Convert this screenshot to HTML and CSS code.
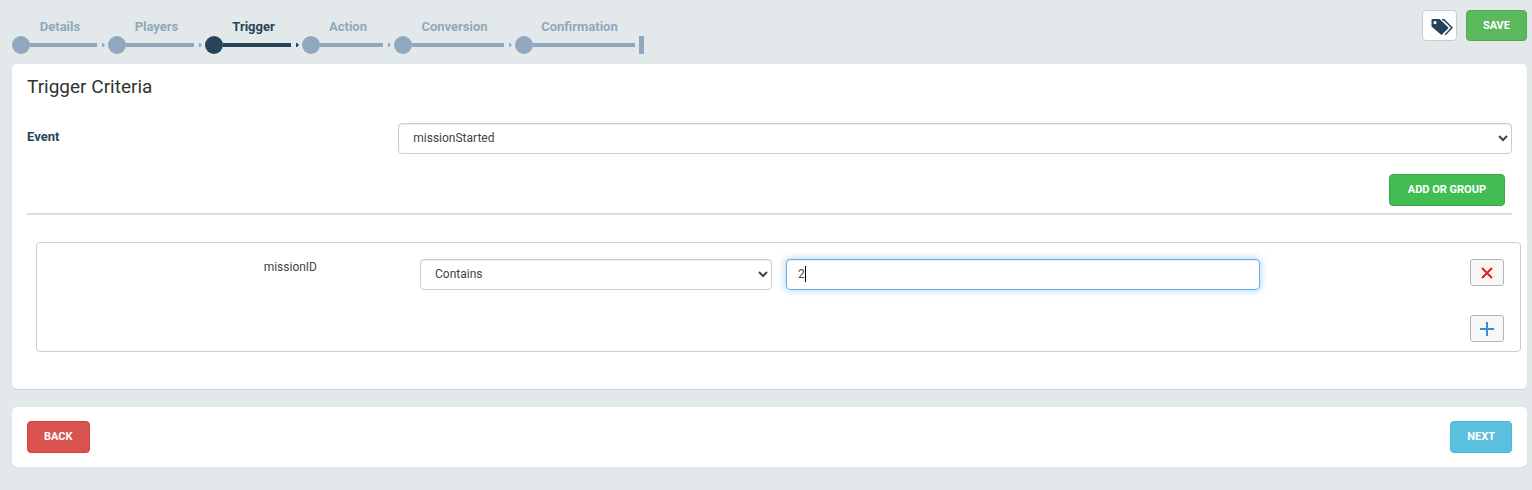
FILE: index.html
```html
<!DOCTYPE html>
<html lang="en">
<head>
<meta charset="utf-8">
<title>Trigger Criteria</title>
<link rel="stylesheet" href="styles.css">
</head>
<body>
<header class="topbar">
  <ol class="wizard">
    <li class="step"><span class="step-label">Details</span><span class="track"><i class="dot"></i><i class="line"></i><i class="arrow"></i></span></li>
    <li class="step"><span class="step-label">Players</span><span class="track"><i class="dot"></i><i class="line"></i><i class="arrow"></i></span></li>
    <li class="step active" aria-current="step"><span class="step-label">Trigger</span><span class="track"><i class="dot"></i><i class="line"></i><i class="arrow"></i></span></li>
    <li class="step"><span class="step-label">Action</span><span class="track"><i class="dot"></i><i class="line"></i><i class="arrow"></i></span></li>
    <li class="step"><span class="step-label">Conversion</span><span class="track"><i class="dot"></i><i class="line"></i><i class="arrow"></i></span></li>
    <li class="step"><span class="step-label">Confirmation</span><span class="track"><i class="dot"></i><i class="line"></i><i class="end"></i></span></li>
  </ol>
  <div class="actions">
    <button class="btn-tags" type="button" aria-label="Tags">
      <svg class="icon-tags" viewBox="0 0 22 18" aria-hidden="true">
        <path fill="#24435b" fill-rule="evenodd" d="M0.500 2q0-1 1-1h7l8.700 8.200q.6.600 0 1.200l-6.200 6.200q-.6.600-1.200 0L.5 8.500zM4 3a1.600 1.600 0 1 0 0 3.200 1.600 1.600 0 0 0 0-3.200z"/>
        <path fill="none" stroke="#24435b" stroke-width="1.500" d="M11 1.500l2 .3 8 8-6.800 7"/>
      </svg>
    </button>
    <button class="btn btn-save" type="button">SAVE</button>
  </div>
</header>
<main>
  <section class="card criteria">
    <h1 class="title">Trigger Criteria</h1>
    <div class="event-row">
      <label class="event-label" for="event">Event</label>
      <select class="control" id="event"><option>missionStarted</option></select>
    </div>
    <div class="add-row"><button class="btn btn-add" type="button">ADD OR GROUP</button></div>
    <hr class="rule">
    <div class="group">
      <div class="condition">
        <label class="condition-label" for="value">missionID</label>
        <select class="control" aria-label="Operator"><option>Contains</option></select>
        <div class="value-box">
          <input class="control focused" id="value" type="text" value="2">
          <span class="caret"></span>
        </div>
        <button class="btn-small" type="button" aria-label="Remove condition">
          <svg class="icon-small" viewBox="0 0 16 16" aria-hidden="true"><path fill="none" stroke="#f21616" stroke-width="2" d="M3 3l10 10M13 3L3 13"/></svg>
        </button>
      </div>
      <div class="group-foot">
        <button class="btn-small" type="button" aria-label="Add condition">
          <svg class="icon-small" viewBox="0 0 16 16" aria-hidden="true"><path fill="none" stroke="#428bca" stroke-width="2" d="M8 1v14M1 8h14"/></svg>
        </button>
      </div>
    </div>
  </section>
  <nav class="card pager">
    <button class="btn btn-back" type="button">BACK</button>
    <button class="btn btn-next" type="button">NEXT</button>
  </nav>
</main>
</body>
</html>
```

FILE: styles.css
```css
* { box-sizing: border-box; }
body {
  margin: 0;
  padding: 10px 5px 0 12px;
  background: #e3e8ea;
  color: #444;
  font-family: Roboto, "Liberation Sans", sans-serif;
  font-size: 12px;
  line-height: 18px;
}
button, select, input { font: inherit; margin: 0; }
button { cursor: pointer; }
.topbar {
  display: flex;
  justify-content: space-between;
  align-items: flex-start;
  height: 54px;
}
.wizard {
  display: grid;
  grid-template-columns: 96px 97px 97px 92px 121px 129px;
  list-style: none;
  margin: 0;
  padding: 8px 0 0;
  font-size: 13px;
  font-weight: 700;
}
.step { color: #90a8be; text-align: center; }
.step.active { color: #27445b; }
.step-label { display: block; }
.track { display: flex; align-items: center; }
.dot { width: 18px; height: 18px; border-radius: 50%; background: currentColor; }
.line { flex: 1; height: 4px; background: currentColor; }
.arrow {
  width: 3px;
  height: 4px;
  margin: 0 3px 0 5px;
  background: currentColor;
  clip-path: polygon(0 0, 35% 0, 100% 50%, 35% 100%, 0 100%);
}
.end { width: 5px; height: 18px; margin-left: 4px; background: currentColor; }
.actions { display: flex; gap: 9px; }
.btn {
  height: 32px;
  padding: 0 16px;
  border: 1px solid;
  border-radius: 4px;
  color: #fff;
  font-size: 11px;
  font-weight: 700;
}
.btn-save { height: 31px; background: #5cb85c; border-color: #4cae4c; }
.btn-add { padding: 0 18px; background: #42bd52; border-color: #36a945; }
.btn-back { background: #d9534f; border-color: #d43f3a; }
.btn-next { background: #5bc0de; border-color: #46b8da; }
.btn-tags {
  width: 35px;
  height: 31px;
  padding: 3px 0 0 6px;
  background: #fff;
  border: 1px solid #ccc;
  border-radius: 4px;
}
.icon-tags { display: block; width: 22px; height: 18px; margin: 0 auto; }
.card {
  background: #fff;
  border-radius: 5px;
  box-shadow: 0 1px 1px rgba(0, 0, 0, .1);
}
.criteria { padding: 12px 15px 37px; }
.title {
  margin: 0;
  color: #333;
  font-size: 19px;
  font-weight: 400;
  line-height: 22px;
}
.event-row {
  display: grid;
  grid-template-columns: 1fr 3fr;
  margin-top: 25px;
}
.event-label { padding-top: 5px; color: #27445b; font-size: 13px; font-weight: 700; }
.control {
  width: 100%;
  height: 31px;
  padding: 0 10px 1px 11px;
  background-color: #fff;
  border: 1px solid #ccc;
  border-radius: 4px;
  box-shadow: inset 0 1px 1px rgba(0, 0, 0, .075);
  color: #444;
}
select.control { padding: 0 11px 1px 10px; }
.focused {
  outline: 0;
  border-color: #66afe9;
  box-shadow: inset 0 1px 1px rgba(0, 0, 0, .075), 0 0 8px rgba(102, 175, 233, .6);
}
.add-row { display: flex; justify-content: flex-end; padding: 20px 7px 7px 0; }
.rule { height: 2px; margin: 0; border: 0; background: #ddd; }
.group {
  margin: 27px -9px 0 9px;
  padding: 16px 16px 9px;
  border: 1px solid #ccc;
  border-radius: 4px;
}
.condition {
  display: grid;
  grid-template-columns: 353fr 352fr 474fr 230fr;
  column-gap: 14px;
  align-items: start;
}
.condition-label { padding: 0 89px 0 0; line-height: 16px; text-align: right; }
.value-box { position: relative; }
.caret {
  position: absolute;
  top: 7px;
  left: 19px;
  width: 1px;
  height: 16px;
  background: #000;
}
.btn-small {
  justify-self: end;
  display: grid;
  place-items: center;
  width: 34px;
  height: 27px;
  padding: 0;
  background: #f7f7f7;
  border: 1px solid #b5b5b5;
  border-radius: 3px;
}
.icon-small { width: 16px; height: 16px; }
.group-foot { display: grid; margin-top: 25px; }
.pager {
  display: flex;
  justify-content: space-between;
  margin-top: 18px;
  padding: 14px 15px;
}
```
